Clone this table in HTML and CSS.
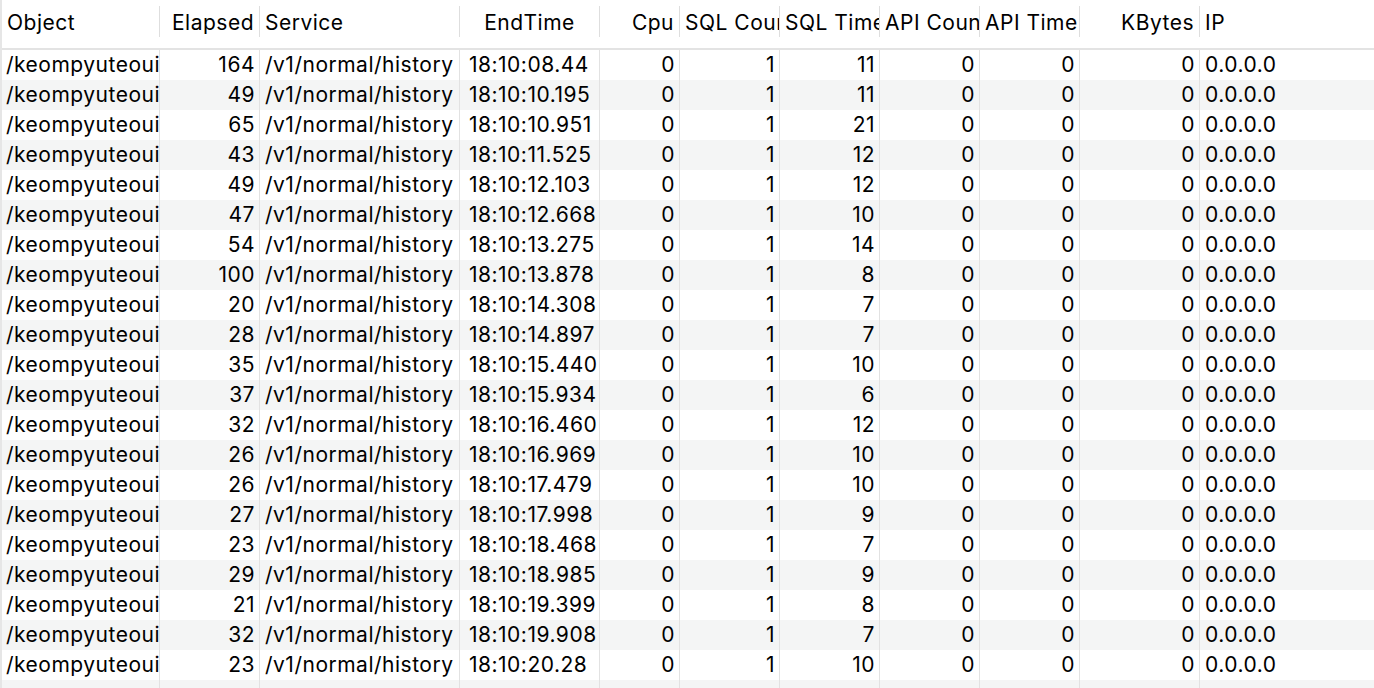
FILE: index.html
```html
<!DOCTYPE html>
<html>
<head>
<meta charset="utf-8">
<link rel="stylesheet" href="styles.css">
</head>
<body>
<div class="table">
  <div class="head">
    <div class="hc l">Object</div>
    <div class="hc r">Elapsed</div>
    <div class="hc l">Service</div>
    <div class="hc c">EndTime</div>
    <div class="hc r">Cpu</div>
    <div class="hc l">SQL Count</div>
    <div class="hc l">SQL Time</div>
    <div class="hc l">API Count</div>
    <div class="hc l">API Time</div>
    <div class="hc r">KBytes</div>
    <div class="hc l last">IP</div>
  </div>
  <div class="body">
    <div class="row"><div class="c-obj">/keompyuteoui</div><div class="num">164</div><div class="c-svc">/v1/normal/history</div><div class="c-time">18:10:08.44</div><div class="num">0</div><div class="num">1</div><div class="num">11</div><div class="num">0</div><div class="num">0</div><div class="num">0</div><div class="c-ip">0.0.0.0</div></div>
    <div class="row"><div class="c-obj">/keompyuteoui</div><div class="num">49</div><div class="c-svc">/v1/normal/history</div><div class="c-time">18:10:10.195</div><div class="num">0</div><div class="num">1</div><div class="num">11</div><div class="num">0</div><div class="num">0</div><div class="num">0</div><div class="c-ip">0.0.0.0</div></div>
    <div class="row"><div class="c-obj">/keompyuteoui</div><div class="num">65</div><div class="c-svc">/v1/normal/history</div><div class="c-time">18:10:10.951</div><div class="num">0</div><div class="num">1</div><div class="num">21</div><div class="num">0</div><div class="num">0</div><div class="num">0</div><div class="c-ip">0.0.0.0</div></div>
    <div class="row"><div class="c-obj">/keompyuteoui</div><div class="num">43</div><div class="c-svc">/v1/normal/history</div><div class="c-time">18:10:11.525</div><div class="num">0</div><div class="num">1</div><div class="num">12</div><div class="num">0</div><div class="num">0</div><div class="num">0</div><div class="c-ip">0.0.0.0</div></div>
    <div class="row"><div class="c-obj">/keompyuteoui</div><div class="num">49</div><div class="c-svc">/v1/normal/history</div><div class="c-time">18:10:12.103</div><div class="num">0</div><div class="num">1</div><div class="num">12</div><div class="num">0</div><div class="num">0</div><div class="num">0</div><div class="c-ip">0.0.0.0</div></div>
    <div class="row"><div class="c-obj">/keompyuteoui</div><div class="num">47</div><div class="c-svc">/v1/normal/history</div><div class="c-time">18:10:12.668</div><div class="num">0</div><div class="num">1</div><div class="num">10</div><div class="num">0</div><div class="num">0</div><div class="num">0</div><div class="c-ip">0.0.0.0</div></div>
    <div class="row"><div class="c-obj">/keompyuteoui</div><div class="num">54</div><div class="c-svc">/v1/normal/history</div><div class="c-time">18:10:13.275</div><div class="num">0</div><div class="num">1</div><div class="num">14</div><div class="num">0</div><div class="num">0</div><div class="num">0</div><div class="c-ip">0.0.0.0</div></div>
    <div class="row"><div class="c-obj">/keompyuteoui</div><div class="num">100</div><div class="c-svc">/v1/normal/history</div><div class="c-time">18:10:13.878</div><div class="num">0</div><div class="num">1</div><div class="num">8</div><div class="num">0</div><div class="num">0</div><div class="num">0</div><div class="c-ip">0.0.0.0</div></div>
    <div class="row"><div class="c-obj">/keompyuteoui</div><div class="num">20</div><div class="c-svc">/v1/normal/history</div><div class="c-time">18:10:14.308</div><div class="num">0</div><div class="num">1</div><div class="num">7</div><div class="num">0</div><div class="num">0</div><div class="num">0</div><div class="c-ip">0.0.0.0</div></div>
    <div class="row"><div class="c-obj">/keompyuteoui</div><div class="num">28</div><div class="c-svc">/v1/normal/history</div><div class="c-time">18:10:14.897</div><div class="num">0</div><div class="num">1</div><div class="num">7</div><div class="num">0</div><div class="num">0</div><div class="num">0</div><div class="c-ip">0.0.0.0</div></div>
    <div class="row"><div class="c-obj">/keompyuteoui</div><div class="num">35</div><div class="c-svc">/v1/normal/history</div><div class="c-time">18:10:15.440</div><div class="num">0</div><div class="num">1</div><div class="num">10</div><div class="num">0</div><div class="num">0</div><div class="num">0</div><div class="c-ip">0.0.0.0</div></div>
    <div class="row"><div class="c-obj">/keompyuteoui</div><div class="num">37</div><div class="c-svc">/v1/normal/history</div><div class="c-time">18:10:15.934</div><div class="num">0</div><div class="num">1</div><div class="num">6</div><div class="num">0</div><div class="num">0</div><div class="num">0</div><div class="c-ip">0.0.0.0</div></div>
    <div class="row"><div class="c-obj">/keompyuteoui</div><div class="num">32</div><div class="c-svc">/v1/normal/history</div><div class="c-time">18:10:16.460</div><div class="num">0</div><div class="num">1</div><div class="num">12</div><div class="num">0</div><div class="num">0</div><div class="num">0</div><div class="c-ip">0.0.0.0</div></div>
    <div class="row"><div class="c-obj">/keompyuteoui</div><div class="num">26</div><div class="c-svc">/v1/normal/history</div><div class="c-time">18:10:16.969</div><div class="num">0</div><div class="num">1</div><div class="num">10</div><div class="num">0</div><div class="num">0</div><div class="num">0</div><div class="c-ip">0.0.0.0</div></div>
    <div class="row"><div class="c-obj">/keompyuteoui</div><div class="num">26</div><div class="c-svc">/v1/normal/history</div><div class="c-time">18:10:17.479</div><div class="num">0</div><div class="num">1</div><div class="num">10</div><div class="num">0</div><div class="num">0</div><div class="num">0</div><div class="c-ip">0.0.0.0</div></div>
    <div class="row"><div class="c-obj">/keompyuteoui</div><div class="num">27</div><div class="c-svc">/v1/normal/history</div><div class="c-time">18:10:17.998</div><div class="num">0</div><div class="num">1</div><div class="num">9</div><div class="num">0</div><div class="num">0</div><div class="num">0</div><div class="c-ip">0.0.0.0</div></div>
    <div class="row"><div class="c-obj">/keompyuteoui</div><div class="num">23</div><div class="c-svc">/v1/normal/history</div><div class="c-time">18:10:18.468</div><div class="num">0</div><div class="num">1</div><div class="num">7</div><div class="num">0</div><div class="num">0</div><div class="num">0</div><div class="c-ip">0.0.0.0</div></div>
    <div class="row"><div class="c-obj">/keompyuteoui</div><div class="num">29</div><div class="c-svc">/v1/normal/history</div><div class="c-time">18:10:18.985</div><div class="num">0</div><div class="num">1</div><div class="num">9</div><div class="num">0</div><div class="num">0</div><div class="num">0</div><div class="c-ip">0.0.0.0</div></div>
    <div class="row"><div class="c-obj">/keompyuteoui</div><div class="num">21</div><div class="c-svc">/v1/normal/history</div><div class="c-time">18:10:19.399</div><div class="num">0</div><div class="num">1</div><div class="num">8</div><div class="num">0</div><div class="num">0</div><div class="num">0</div><div class="c-ip">0.0.0.0</div></div>
    <div class="row"><div class="c-obj">/keompyuteoui</div><div class="num">32</div><div class="c-svc">/v1/normal/history</div><div class="c-time">18:10:19.908</div><div class="num">0</div><div class="num">1</div><div class="num">7</div><div class="num">0</div><div class="num">0</div><div class="num">0</div><div class="c-ip">0.0.0.0</div></div>
    <div class="row"><div class="c-obj">/keompyuteoui</div><div class="num">23</div><div class="c-svc">/v1/normal/history</div><div class="c-time">18:10:20.28</div><div class="num">0</div><div class="num">1</div><div class="num">10</div><div class="num">0</div><div class="num">0</div><div class="num">0</div><div class="c-ip">0.0.0.0</div></div>
    <div class="row"><div></div><div></div><div></div><div></div><div></div><div></div><div></div><div></div><div></div><div></div><div class="c-ip"></div></div>
  </div>
</div>
</body>
</html>
```

FILE: styles.css
```css
html, body {
  margin: 0;
  padding: 0;
  background: #ffffff;
  overflow: hidden;
  height: 688px;
}

.table {
  --cols: 158px 100px 200px 140px 80px 100px 100px 100px 100px 120px 1fr;
  border-left: 2px solid #e6e6e6;
  font-family: "Inter", "Noto Sans", sans-serif;
  font-size: 21px;
  letter-spacing: 0.5px;
  color: #000000;
  height: 688px;
  overflow: hidden;
}

.head {
  display: grid;
  grid-template-columns: var(--cols);
  height: 48px;
  border-bottom: 2px solid #e3e3e3;
  align-items: start;
}

.hc {
  box-sizing: border-box;
  margin-top: 6px;
  height: 31px;
  line-height: 31px;
  padding: 1px 5px 0;
  border-right: 1px solid #dedede;
  white-space: nowrap;
  overflow: hidden;
}

.hc.l { text-align: left; }
.hc.r { text-align: right; }
.hc.c { text-align: center; }
.hc.last { border-right: none; }

.row {
  display: grid;
  grid-template-columns: var(--cols);
  height: 30px;
  line-height: 29px;
}

.row:nth-child(even) {
  background: #f4f5f5;
}

.row > div {
  border-right: 1px solid #e2e2e2;
  white-space: nowrap;
  overflow: hidden;
  padding: 0 4px 0 5px;
}

.row > .c-ip {
  border-right: none;
}

.row > .c-obj { padding-left: 4px; }
.row > .c-svc { padding-left: 5px; }
.row > .c-time { padding-left: 9px; padding-right: 0; }
.num { text-align: right; }
```
